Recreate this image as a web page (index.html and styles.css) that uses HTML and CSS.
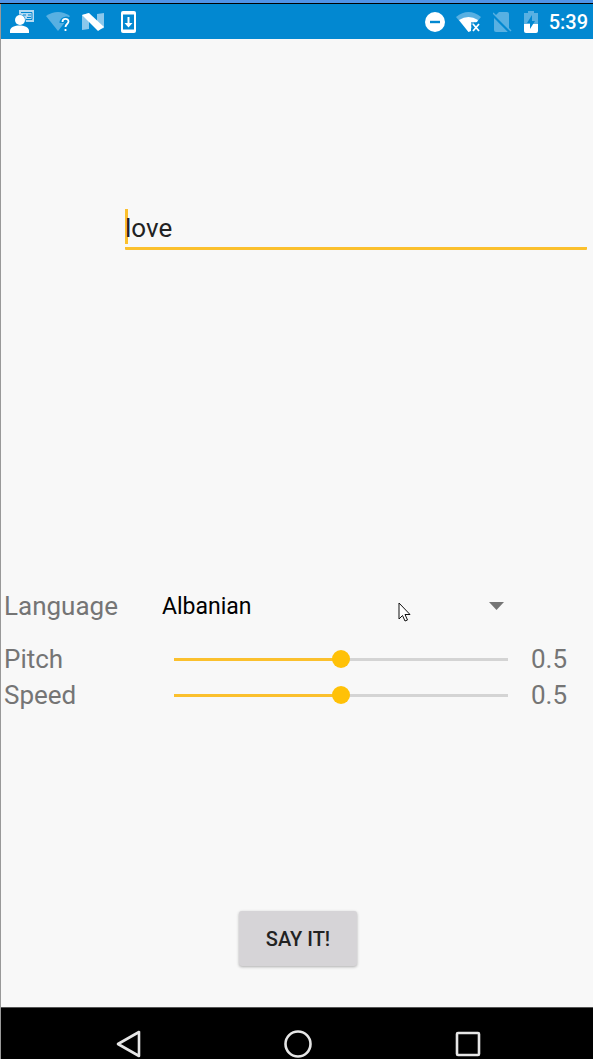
FILE: index.html
```html
<!DOCTYPE html>
<html lang="en">
<head>
<meta charset="utf-8">
<meta name="viewport" content="width=device-width, initial-scale=1">
<title>Text to speech</title>
<link rel="stylesheet" href="styles.css">
</head>
<body>
<div class="window-edge"></div>
<div class="screen">
  <header class="status-bar">
    <div class="status-group status-left">
      <svg width="24" height="24" viewBox="0 0 24 24" aria-hidden="true">
        <path d="M9 0h15v12h-8l-1-3H9z" fill="#b5daf2"/>
        <path d="M11 2.500h11v7h-6" fill="none" stroke="#0288d1" stroke-width="1"/>
        <path d="M13 5h3M18 5h3M17 7.500h4" stroke="#0288d1" stroke-width="1"/>
        <circle cx="10" cy="10" r="5.500" fill="#0288d1"/>
        <circle cx="10" cy="10" r="5" fill="#fff"/>
        <path d="M0 23v-2c0-4 5-5.500 9.500-5.500S19 17 19 21v2z" fill="#fff"/>
      </svg>
      <svg width="24" height="24" viewBox="0 0 24 24" aria-hidden="true">
        <path d="M0 6Q12-2 24 6L12 21z" fill="#58b0e2"/>
        <path d="M16 13c0-5 7-5 7-1 0 3-3 3-3 6" fill="none" stroke="#0288d1" stroke-width="5"/>
        <path d="M16.500 12c0-4 6-4 6-.5 0 2.500-3 2.500-3 5.500M19.500 19v2" fill="none" stroke="#fff" stroke-width="1.800"/>
      </svg>
      <svg width="22" height="20" viewBox="0 0 22 20" aria-hidden="true">
        <path d="M0 3l7-2v16l-7 1zM15 2l7-1v15l-7 2z" fill="#8bc8ec"/>
        <path d="M0 3l7-2 15 14-6 4z" fill="#fff"/>
      </svg>
      <svg width="24" height="24" viewBox="0 0 24 24" aria-hidden="true">
        <rect x="5" y="1" width="15" height="22" rx="2" fill="#fff"/>
        <path d="M7 4.500h11v15H7z" fill="#0288d1"/>
        <path d="M11.500 7h2v6h3l-4 4.500-4-4.500h3z" fill="#fff"/>
      </svg>
    </div>
    <div class="status-group status-right">
      <svg width="22" height="22" viewBox="0 0 22 22" aria-hidden="true">
        <circle cx="12" cy="11" r="10" fill="#fff"/>
        <path d="M7 11h10" stroke="#0288d1" stroke-width="2.400"/>
      </svg>
      <svg width="26" height="22" viewBox="0 0 26 22" aria-hidden="true">
        <path d="M0 6Q12.500-4 25 6L12.500 21z" fill="#58b0e2"/>
        <path d="M3 9Q12.500 3 22 9l-1 2h-6v9l-2.500 1z" fill="#fff"/>
        <path d="M17 13l6 7M23 13l-6 7" stroke="#0288d1" stroke-width="5"/>
        <path d="M17 13l6 7M23 13l-6 7" stroke="#fff" stroke-width="1.800"/>
      </svg>
      <svg width="20" height="22" viewBox="0 0 20 22" aria-hidden="true">
        <path d="M6 1h8q2 0 2 2v16q0 2-2 2H3q-2 0-2-2V6z" fill="#58b0e2"/>
        <path d="M0 4l17 17" stroke="#0288d1" stroke-width="3"/>
        <path d="M0 2l18 18" stroke="#58b0e2" stroke-width="1.400"/>
      </svg>
      <svg width="14" height="22" viewBox="0 0 14 22" aria-hidden="true">
        <path d="M0 2h4V0h6v2h4v12H0z" fill="#58b0e2"/>
        <path d="M0 13h14v7q0 2-2 2H2q-2 0-2-2z" fill="#fff"/>
        <path d="M8 4l-5 8h3v6l5-8H8z" fill="#0288d1"/>
      </svg>
      <time class="clock">5:39</time>
    </div>
  </header>

  <main class="content">
    <div class="text-field">
      <input class="text-input" type="text" value="love" aria-label="Text to say">
      <span class="caret"></span>
    </div>

    <div class="settings">
      <label class="label" for="language">Language</label>
      <div class="spinner">
        <select class="spinner-select" id="language">
          <option>Albanian</option>
        </select>
        <svg class="spinner-arrow" width="15" height="8" viewBox="0 0 15 8" aria-hidden="true"><path d="M0 0h15L7.500 8z" fill="#757575"/></svg>
        <svg class="pointer" width="13" height="20" viewBox="0 0 13 20" aria-hidden="true"><path d="M1 1v16l3.500-3.500L7 19l2.500-1-2.500-5.500h5z" fill="#fff" stroke="#111"/></svg>
      </div>
      <label class="label" for="pitch">Pitch</label>
      <input class="slider" id="pitch" type="range" min="0" max="1" step="0.1" value="0.5">
      <output class="value" for="pitch">0.5</output>
      <label class="label" for="speed">Speed</label>
      <input class="slider" id="speed" type="range" min="0" max="1" step="0.1" value="0.5">
      <output class="value" for="speed">0.5</output>
    </div>

    <button class="say-button" type="button">SAY IT!</button>
  </main>

  <nav class="nav-bar" aria-label="System navigation">
    <button class="nav-button" type="button" aria-label="Back">
      <svg width="28" height="28" viewBox="0 0 28 28"><path d="M25 2v24L4 14z" fill="none" stroke="#e6e6e6" stroke-width="2.600" stroke-linejoin="round"/></svg>
    </button>
    <button class="nav-button" type="button" aria-label="Home">
      <svg width="28" height="28" viewBox="0 0 28 28"><circle cx="14" cy="14" r="12.500" fill="none" stroke="#e6e6e6" stroke-width="2.600"/></svg>
    </button>
    <button class="nav-button" type="button" aria-label="Overview">
      <svg width="28" height="28" viewBox="0 0 28 28"><rect x="3" y="3" width="22" height="22" rx="1" fill="none" stroke="#e6e6e6" stroke-width="2.600"/></svg>
    </button>
  </nav>
</div>
</body>
</html>
```
FILE: styles.css
```css
* {
  box-sizing: border-box;
}

body {
  margin: 0;
  min-height: 100vh;
  display: flex;
  flex-direction: column;
  background: #f8f8f8;
  font-family: Roboto, "Noto Sans", sans-serif;
}

svg {
  display: block;
  flex: none;
}

.window-edge {
  height: 4px;
  background: #5094e8;
  border-bottom: 1px solid #000;
}

.screen {
  flex: 1;
  display: flex;
  flex-direction: column;
  border-left: 1px solid #999;
}

.status-bar {
  height: 35px;
  padding: 0 5px 0 9px;
  display: flex;
  align-items: center;
  justify-content: space-between;
  background: #0288d1;
}

.status-group {
  display: flex;
  align-items: center;
}

.status-left {
  gap: 12px;
}

.status-right {
  gap: 11px;
}

.clock {
  color: #fff;
  font-size: 20px;
  font-weight: 500;
  line-height: 24px;
}

.content {
  flex: 1;
  display: flex;
  flex-direction: column;
  padding: 170px 0 41px;
}

.text-field {
  position: relative;
  margin: 0 6px 0 124px;
}

.text-input {
  display: block;
  width: 100%;
  height: 41px;
  padding: 0;
  border: 0;
  border-bottom: 3px solid #fbc02d;
  border-radius: 1px;
  background: none;
  color: #222;
  font-family: inherit;
  font-size: 26px;
  outline: 0;
}

.caret {
  position: absolute;
  top: 0;
  left: 0;
  width: 3px;
  height: 35px;
  background: #fbc02d;
  z-index: -1;
}

.settings {
  margin-top: auto;
  margin-bottom: 198px;
  padding-left: 3px;
  display: grid;
  grid-template-columns: 158px 1fr 73px;
  grid-template-rows: 70px 36px 36px;
  align-items: center;
}

.label,
.value {
  color: #757575;
  font-size: 26px;
  line-height: 36px;
}

.label {
  grid-column: 1;
}

.value {
  padding-left: 11px;
}

.spinner {
  position: relative;
}

.spinner-select {
  display: block;
  width: 100%;
  height: 36px;
  padding: 0;
  border: 0;
  appearance: none;
  background: none;
  color: #000;
  font-family: inherit;
  font-size: 23px;
}

.spinner-arrow {
  position: absolute;
  top: 14px;
  right: 16px;
  pointer-events: none;
}

.pointer {
  position: absolute;
  top: 14px;
  left: 66%;
  pointer-events: none;
}

.slider {
  appearance: none;
  height: 18px;
  margin: 0 12px;
  background: linear-gradient(#fbc02d, #fbc02d) left center / 50% 3px no-repeat,
    linear-gradient(#d4d4d4, #d4d4d4) left center / 100% 3px no-repeat;
}

.slider::-webkit-slider-thumb {
  appearance: none;
  width: 18px;
  height: 18px;
  border-radius: 50%;
  background: #ffc107;
}

.say-button {
  align-self: center;
  width: 118px;
  height: 55px;
  margin-left: 2px;
  padding: 0;
  border: 0;
  border-radius: 3px;
  background: #d6d4d7;
  box-shadow: 0 1px 3px rgba(0, 0, 0, 0.3);
  color: #222;
  font-family: inherit;
  font-size: 20px;
  font-weight: 500;
}

.nav-bar {
  height: 52px;
  padding: 20px 40px 0 42px;
  display: flex;
  justify-content: space-around;
  border-top: 1px solid #555;
  background: #000;
}

.nav-button {
  padding: 0;
  border: 0;
  background: none;
}
```
